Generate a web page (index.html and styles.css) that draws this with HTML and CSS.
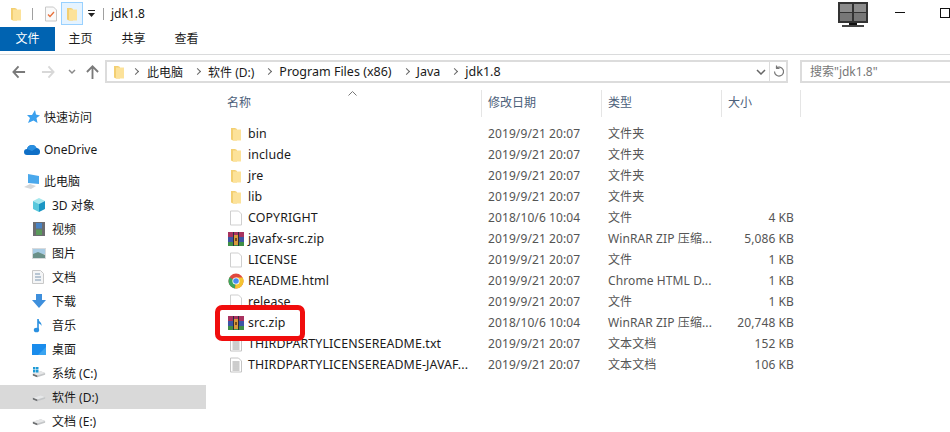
FILE: index.html
```html
<!DOCTYPE html>
<html>
	<head>
		<title>jdk1.8</title>
		<link rel="stylesheet" href="styles.css">
	</head>
	<body>
		<svg class="defs" width="0" height="0">
			<symbol id="folder" viewBox="0 0 16 16">
				<path d="M3 2h4l2 1v11.500H5l-2-1z" fill="#f3cf72"/>
				<path d="M5 3.500h8v11H5z" fill="#fce29a"/>
			</symbol>
			<symbol id="doc" viewBox="0 0 16 16">
				<path d="M2.500 1h8l3 3v11h-11z" fill="#fff" stroke="#cfcfcf"/>
			</symbol>
			<symbol id="txt" viewBox="0 0 16 16">
				<path d="M2.500 1h8l3 3v11h-11z" fill="#fff" stroke="#c4c4c4"/>
				<path d="M4.500 5h7M4.500 7h7M4.500 9h7M4.500 11h7M4.500 13h7" stroke="#9a9a9a"/>
			</symbol>
			<symbol id="rar" viewBox="0 0 16 16">
				<path d="M0 1h16v5H0z" fill="#a8325f"/>
				<path d="M0 6h16v5H0z" fill="#3d55a5"/>
				<path d="M0 11h16v4H0z" fill="#3f8f46"/>
				<path d="M5 1h1v14H5zM10 1h1v14h-1z" fill="#2c2c3c"/>
				<path d="M6 4h4v10H6z" fill="#d99a3c"/>
				<path d="M7 7h2v3H7z" fill="#7a4a1c"/>
			</symbol>
			<symbol id="chrome" viewBox="0 0 16 16">
				<circle cx="8" cy="8" r="7.500" fill="#e0483e"/>
				<path d="M8 8L1.500 4.200A7.500 7.500 0 0 0 7 15.400z" fill="#3ca55c"/>
				<path d="M8 4.500h6.700A7.500 7.500 0 0 1 7 15.400L8 8z" fill="#f5c431"/>
				<circle cx="8" cy="8" r="3.600" fill="#fff"/>
				<circle cx="8" cy="8" r="2.800" fill="#4a8bf0"/>
			</symbol>
			<symbol id="drive" viewBox="0 0 16 16">
				<path d="M1 10l9-3 5 2v2l-9 3-5-2z" fill="#c4c6c8"/>
				<path d="M1 10l5 2 9-3-5-2z" fill="#e6e7e8"/>
				<path d="M1 10l5 2v2l-5-2z" fill="#6c6e70"/>
			</symbol>
		</svg>

		<div class="titlebar">
			<svg class="ico16 tb-folder"><use href="#folder"/></svg>
			<span class="tb-sep"></span>
			<svg class="tb-check" width="14" height="16" viewBox="0 0 14 16">
				<path d="M1.500 1h8l3 3v11h-11z" fill="#fafafa" stroke="#c8c8c8"/>
				<path d="M4 8.500l2 2 4-4.500" fill="none" stroke="#e8703a" stroke-width="1.300"/>
			</svg>
			<span class="tb-active"><svg class="ico16"><use href="#folder"/></svg></span>
			<svg class="tb-drop" width="8" height="8" viewBox="0 0 8 8">
				<path d="M0 0h7v1H0zM0 3h7L3.500 7z" fill="#222"/>
			</svg>
			<span class="tb-sep last"></span>
			<span class="tb-title">jdk1.8</span>
			<svg class="tb-monitor" width="30" height="26" viewBox="0 0 30 26">
				<path d="M0 1h30v21H0z" fill="#333"/>
				<path d="M2 3h12v8H2zM16 3h12v8H16z" fill="#8c8c8c"/>
				<path d="M2 12h12v8H2zM16 12h12v8H16z" fill="#777"/>
				<path d="M11 22h8v2H11z" fill="#111"/>
				<path d="M4 24h22v2H4z" fill="#444"/>
			</svg>
			<span class="win-min"></span>
			<span class="win-max"></span>
		</div>

		<div class="tabs">
			<span class="tab tab-file">文件</span>
			<span class="tab">主页</span>
			<span class="tab">共享</span>
			<span class="tab">查看</span>
		</div>

		<div class="navbar">
			<svg class="nav-btn" width="14" height="14" viewBox="0 0 15 14">
				<path d="M7 1L1.500 7 7 13M2 7h12" fill="none" stroke="#7a7a7a" stroke-width="2"/>
			</svg>
			<svg class="nav-btn next" width="14" height="14" viewBox="0 0 15 14">
				<path d="M8 1l5.500 6L8 13M13 7H1" fill="none" stroke="#d8d8d8" stroke-width="2"/>
			</svg>
			<svg class="nav-btn recent" width="8" height="6" viewBox="0 0 8 6">
				<path d="M1 1l3 3 3-3" fill="none" stroke="#8a8a8a" stroke-width="1.500"/>
			</svg>
			<svg class="nav-btn up" width="13" height="14" viewBox="0 0 14 15">
				<path d="M1 7.500L7 1.500l6 6M7 2v13" fill="none" stroke="#7a7a7a" stroke-width="2"/>
			</svg>
			<div class="address">
				<svg class="ico16 addr-folder"><use href="#folder"/></svg>
				<span class="crumb-arrow first"></span>
				<span class="crumb crumb-small">此电脑</span>
				<span class="crumb-arrow"></span>
				<span class="crumb crumb-small">软件 (D:)</span>
				<span class="crumb-arrow"></span>
				<span class="crumb">Program Files (x86)</span>
				<span class="crumb-arrow"></span>
				<span class="crumb">Java</span>
				<span class="crumb-arrow"></span>
				<span class="crumb">jdk1.8</span>
				<svg class="addr-drop" width="10" height="6" viewBox="0 0 10 6">
					<path d="M1 1l4 4 4-4" fill="none" stroke="#666" stroke-width="1.500"/>
				</svg>
				<span class="addr-refresh">
					<svg width="11" height="13" viewBox="0 0 11 13">
						<path d="M3 3.200a4.500 4.500 0 1 1-1.500 3.300M3.500 0.500v3h3" fill="none" stroke="#777" stroke-width="1.200"/>
					</svg>
				</span>
			</div>
			<div class="search">搜索"jdk1.8"</div>
		</div>

		<div class="content">
			<div class="sidebar">
				<div class="side-item top">
					<svg class="side-ico" width="14" height="14" viewBox="0 0 14 14">
						<path d="M9 0l1 4.500 4 1-3.500 2.500 1 5L7.500 10.500 2 13l2-5-3-3h5z" fill="#3aa0ee"/>
					</svg>
					<span>快速访问</span>
				</div>
				<div class="side-item top">
					<svg class="side-ico wide" width="16" height="11" viewBox="0 0 16 11">
						<path d="M0 8a3 3 0 0 1 3-3 5 5 0 0 1 9.500-1 3.500 3.500 0 0 1 3.500 4c0 2-1 3-3 3H3a3 3 0 0 1-3-3z" fill="#0f6fc6"/>
						<path d="M3 5a5 5 0 0 1 9.500-1L8 7z" fill="#2a8fe0"/>
					</svg>
					<span>OneDrive</span>
				</div>
				<div class="side-item top">
					<svg class="side-ico wide" width="16" height="15" viewBox="0 0 16 15">
						<path d="M4 0l11 2v8L4 9z" fill="#4aa8ec"/>
						<path d="M0 13l6-3 6 2-5 3z" fill="#d6d8da"/>
					</svg>
					<span>此电脑</span>
				</div>
				<div class="side-item">
					<svg class="sub-ico" width="14" height="14" viewBox="0 0 14 14">
						<path d="M7 0l6 3-6 3-6-3z" fill="#a5e8ee"/>
						<path d="M1 3l6 3v8l-6-3z" fill="#58c8dc"/>
						<path d="M13 3L7 6v8l6-3z" fill="#1a96c4"/>
					</svg>
					<span>3D 对象</span>
				</div>
				<div class="side-item">
					<svg class="sub-ico" width="14" height="14" viewBox="0 0 14 14">
						<path d="M1 0h12v14H1z" fill="#6c6c70"/>
						<path d="M4 1h6v5.500H4z" fill="#4a84c4"/>
						<path d="M4 7.500h6V13H4z" fill="#5a9a5c"/>
					</svg>
					<span>视频</span>
				</div>
				<div class="side-item">
					<svg class="sub-ico" width="14" height="11" viewBox="0 0 14 11">
						<path d="M0 0h14v11H0z" fill="#d8dadc"/>
						<path d="M1 1h12v5H1z" fill="#a8cce4"/>
						<path d="M1 6l5-2 7 3v3H1z" fill="#6a9088"/>
					</svg>
					<span>图片</span>
				</div>
				<div class="side-item">
					<svg class="sub-ico" width="12" height="14" viewBox="0 0 12 14">
						<path d="M.5.500h8l3 3v10H.5z" fill="#f4f5f6" stroke="#c8c8c8"/>
						<path d="M3 4h5M3 7h6M3 10h6" stroke="#7a96b0"/>
					</svg>
					<span>文档</span>
				</div>
				<div class="side-item">
					<svg class="sub-ico" width="14" height="14" viewBox="0 0 14 14">
						<path d="M4 0h6v6h4l-7 8-7-8h4z" fill="#3e8fdc"/>
					</svg>
					<span>下载</span>
				</div>
				<div class="side-item">
					<svg class="sub-ico" width="14" height="15" viewBox="0 0 14 15">
						<path d="M6 1v10" stroke="#2a90e0" stroke-width="1.600"/>
						<ellipse cx="4.500" cy="12" rx="2.700" ry="2.300" fill="#2a90e0"/>
						<path d="M6 1c1 3 4 3 3.500 7C9 6 7 5.500 6 5z" fill="#2a90e0"/>
					</svg>
					<span>音乐</span>
				</div>
				<div class="side-item">
					<svg class="sub-ico" width="14" height="11" viewBox="0 0 14 11">
						<path d="M0 0h14v11H0z" fill="#1a8cec"/>
						<path d="M6 11l8-8v8z" fill="#3aa4f0"/>
					</svg>
					<span>桌面</span>
				</div>
				<div class="side-item">
					<svg class="sub-ico" width="14" height="12" viewBox="0 0 14 12">
						<use href="#drive" width="14" height="14" y="-2"/>
						<path d="M1 0h2.500v2.500H1zM4 0h2.500v2.500H4zM1 3h2.500v2.500H1zM4 3h2.500v2.500H4z" fill="#1d9ad6"/>
					</svg>
					<span>系统 (C:)</span>
				</div>
				<div class="side-item selected">
					<svg class="sub-ico" width="14" height="12" viewBox="0 0 14 12"><use href="#drive" width="14" height="14" y="-2"/></svg>
					<span>软件 (D:)</span>
				</div>
				<div class="side-item">
					<svg class="sub-ico" width="14" height="12" viewBox="0 0 14 12"><use href="#drive" width="14" height="14" y="-2"/></svg>
					<span>文档 (E:)</span>
				</div>
			</div>

			<div class="files">
				<div class="file-head">
					<span class="col-name">
						名称
						<svg class="sort" width="9" height="5" viewBox="0 0 9 5">
							<path d="M.5 4.500l4-4 4 4" fill="none" stroke="#777"/>
						</svg>
					</span>
					<span class="col">修改日期</span>
					<span class="col">类型</span>
					<span class="col col-last">大小</span>
				</div>
				<div class="row"><span class="name"><svg class="ico16"><use href="#folder"/></svg>bin</span><span>2019/9/21 20:07</span><span>文件夹</span><span class="size"></span></div>
				<div class="row"><span class="name"><svg class="ico16"><use href="#folder"/></svg>include</span><span>2019/9/21 20:07</span><span>文件夹</span><span class="size"></span></div>
				<div class="row"><span class="name"><svg class="ico16"><use href="#folder"/></svg>jre</span><span>2019/9/21 20:07</span><span>文件夹</span><span class="size"></span></div>
				<div class="row"><span class="name"><svg class="ico16"><use href="#folder"/></svg>lib</span><span>2019/9/21 20:07</span><span>文件夹</span><span class="size"></span></div>
				<div class="row"><span class="name"><svg class="ico16"><use href="#doc"/></svg>COPYRIGHT</span><span>2018/10/6 10:04</span><span>文件</span><span class="size">4 KB</span></div>
				<div class="row"><span class="name"><svg class="ico16"><use href="#rar"/></svg>javafx-src.zip</span><span>2019/9/21 20:07</span><span>WinRAR ZIP 压缩...</span><span class="size">5,086 KB</span></div>
				<div class="row"><span class="name"><svg class="ico16"><use href="#doc"/></svg>LICENSE</span><span>2019/9/21 20:07</span><span>文件</span><span class="size">1 KB</span></div>
				<div class="row"><span class="name"><svg class="ico16"><use href="#chrome"/></svg>README.html</span><span>2019/9/21 20:07</span><span>Chrome HTML D...</span><span class="size">1 KB</span></div>
				<div class="row"><span class="name"><svg class="ico16"><use href="#doc"/></svg>release</span><span>2019/9/21 20:07</span><span>文件</span><span class="size">1 KB</span></div>
				<div class="row"><span class="name"><svg class="ico16"><use href="#rar"/></svg>src.zip</span><span>2018/10/6 10:04</span><span>WinRAR ZIP 压缩...</span><span class="size">20,748 KB</span></div>
				<div class="row"><span class="name"><svg class="ico16"><use href="#txt"/></svg>THIRDPARTYLICENSEREADME.txt</span><span>2019/9/21 20:07</span><span>文本文档</span><span class="size">152 KB</span></div>
				<div class="row"><span class="name"><svg class="ico16"><use href="#txt"/></svg>THIRDPARTYLICENSEREADME-JAVAF...</span><span>2019/9/21 20:07</span><span>文本文档</span><span class="size">106 KB</span></div>
			</div>
		</div>

		<div class="red-box"></div>
	</body>
</html>
```

FILE: styles.css
```css
html, body{
	margin: 0;
	height: 432px;
	overflow: hidden;
	background: #fff;
}
body{
	font-family: "Noto Sans", "Noto Sans CJK SC", sans-serif;
	font-size: 12px;
	color: #1a1a1a;
	position: relative;
}
.defs{
	position: absolute;
}
.ico16{
	width: 16px;
	height: 16px;
	flex: none;
}

/* title bar */
.titlebar{
	height: 27px;
	display: flex;
	align-items: center;
	padding-left: 8px;
}
.tb-sep{
	width: 1px;
	height: 12px;
	background: #a0a0a0;
	margin: 0 11px 0 8px;
}
.tb-sep.last{
	margin: 0 7px 0 7px;
}
.tb-check{
	margin-right: 3px;
}
.tb-active{
	width: 20px;
	height: 21px;
	display: flex;
	align-items: center;
	justify-content: center;
	background: #e5f3ff;
	border: 1px solid #99d1ff;
	margin-right: 5px;
}
.tb-title{
	font-size: 12px;
	color: #111;
}
.tb-monitor{
	margin-left: auto;
	margin-right: 27px;
}
.win-min{
	width: 10px;
	height: 1px;
	background: #111;
	margin: 0 35px 2px 0;
}
.win-max{
	width: 8px;
	height: 8px;
	border: 1px solid #111;
	flex: none;
	margin-bottom: 2px;
}

/* ribbon tabs */
.tabs{
	height: 24px;
	display: flex;
	padding-bottom: 3px;
	border-bottom: 1px solid #dadbdc;
}
.tab{
	width: 53px;
	line-height: 23px;
	text-align: center;
}
.tab-file{
	width: 55px;
	margin-right: -1px;
	background: #0063b1;
	color: #fff;
}

/* nav bar */
.navbar{
	height: 23px;
	margin-top: 5px;
	display: flex;
	align-items: center;
	padding-left: 12px;
}
.nav-btn{
	flex: none;
}
.nav-btn.next{
	margin-left: 15px;
}
.nav-btn.recent{
	margin-left: 13px;
}
.nav-btn.up{
	margin-left: 10px;
}
.address{
	width: 675px;
	height: 19px;
	margin-left: 6px;
	border: 2px solid #dcdcdc;
	display: flex;
	align-items: center;
	padding-left: 4px;
	flex: none;
}
.addr-folder{
	margin-right: 2px;
}
.crumb-arrow{
	width: 4px;
	height: 4px;
	border-top: 1px solid #666;
	border-right: 1px solid #666;
	transform: rotate(45deg);
	flex: none;
	margin: 0 8px 0 4px;
}
.crumb-arrow.first{
	margin-right: 9px;
}
.crumb{
	margin-right: 8px;
	font-size: 12.500px;
}
.crumb-small{
	font-size: 12px;
}
.addr-drop{
	margin-left: auto;
	margin-right: 3px;
}
.addr-refresh{
	width: 16px;
	height: 19px;
	border-left: 1px solid #dcdcdc;
	display: flex;
	align-items: center;
	justify-content: center;
}
.search{
	width: 150px;
	height: 19px;
	margin-left: 12px;
	border: 2px solid #dcdcdc;
	border-right: 0;
	line-height: 19px;
	padding-left: 8px;
	color: #777;
	flex: none;
}

/* sidebar + file list */
.content{
	display: flex;
	margin-top: 3px;
}
.sidebar{
	width: 207px;
	flex: none;
	padding-top: 19px;
}
.side-item{
	height: 24px;
	display: flex;
	align-items: center;
	padding-left: 52px;
	position: relative;
}
.side-item.top{
	height: 24px;
	padding-left: 44px;
	margin-bottom: 8px;
}
.side-item.top:nth-child(3){
	margin-bottom: 0;
}
.side-ico{
	position: absolute;
	left: 26px;
}
.side-ico.wide{
	left: 24px;
}
.sub-ico{
	position: absolute;
	left: 32px;
}
.selected{
	background: #d9d9d9;
	margin-right: 1px;
}
.files{
	flex: 1;
	padding: 4px 0 0 13px;
}
.file-head{
	height: 27px;
	display: grid;
	grid-template-columns: 254px 120px 120px 80px;
	margin-bottom: 6px;
	padding-left: 7px;
	color: #4c607a;
}
.col-name, .col{
	line-height: 25px;
	position: relative;
}
.col{
	padding-left: 6px;
	border-left: 1px solid #e5e5e5;
}
.col-last{
	border-right: 1px solid #e5e5e5;
}
.sort{
	position: absolute;
	left: 121px;
	top: 1px;
}
.row{
	height: 21px;
	line-height: 21px;
	display: grid;
	grid-template-columns: 260px 120px 120px 66px;
	padding-left: 8px;
	color: #555;
	letter-spacing: .1px;
}
.name{
	display: flex;
	align-items: center;
	color: #1a1a1a;
	white-space: nowrap;
	font-size: 12.400px;
	letter-spacing: .1px;
}
.name .ico16{
	margin-right: 4px;
}
.size{
	text-align: right;
}

.red-box{
	position: absolute;
	left: 215px;
	top: 305px;
	width: 80px;
	height: 26px;
	border: 5px solid #f00d0d;
	border-radius: 7px;
}
```
